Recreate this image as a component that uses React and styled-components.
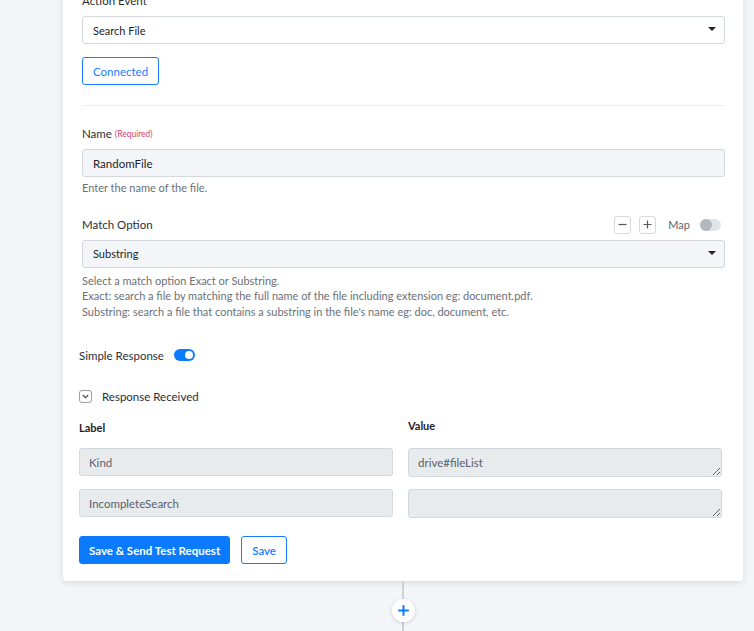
import React from "react";
import styled, { createGlobalStyle } from "styled-components";

const Global = createGlobalStyle`
  html, body { margin: 0; padding: 0; background: #f3f5f8; }
  body { font-family: "Lato", "Open Sans", sans-serif; color: #1e2329; overflow: hidden; }
  * { box-sizing: border-box; }
`;

const Page = styled.div`
  width: 754px;
  height: 631px;
  overflow: hidden;
  padding-left: 63px;
  padding-right: 11px;
  display: flex;
  flex-direction: column;
  align-items: stretch;
`;

const Card = styled.div`
  margin-top: -7px;
  background: #fff;
  border-radius: 0 0 4px 4px;
  box-shadow: 0 2px 6px rgba(30, 40, 60, 0.12);
  padding: 0 0 17px 0;
`;

const Upper = styled.div`
  padding: 0 18px 0 19px;
`;

const Lower = styled.div`
  padding: 0 21px 0 16px;
`;

const Label = styled.div`
  font-size: 11.5px;
  line-height: 16px;
  color: #2a2f35;
  margin-bottom: ${p => p.$mb ?? 7}px;
  display: flex;
  align-items: center;
`;

const Required = styled.span`
  color: #d1456c;
  font-size: 8.5px;
  margin-left: 3px;
`;

const SelectBox = styled.div`
  height: 28px;
  border: 1px solid #d3d7de;
  border-radius: 3px;
  background: ${p => (p.$filled ? "#f3f5f8" : "#fff")};
  display: flex;
  align-items: center;
  justify-content: space-between;
  padding: 0 8px 0 10px;
  font-size: 11px;
  color: #1e2329;
`;

const Caret = styled.span`
  width: 0;
  height: 0;
  border-left: 4px solid transparent;
  border-right: 4px solid transparent;
  border-top: 4px solid #222;
  margin-top: -2px;
`;

const ButtonRow = styled.div`
  display: flex;
  gap: 11px;
  margin-top: ${p => p.$mt ?? 0}px;
`;

const OutlineButton = styled.button`
  height: 28px;
  padding: 0 10px;
  background: #fff;
  border: 1px solid #1a7bff;
  border-radius: 3px;
  color: #1a7bff;
  font-family: inherit;
  font-size: 11.5px;
  font-weight: ${p => (p.$bold ? 600 : 400)};
  cursor: pointer;
`;

const PrimaryButton = styled.button`
  height: 28px;
  padding: 0 9px;
  background: #0a7bff;
  border: 1px solid #0a7bff;
  border-radius: 3px;
  color: #fff;
  font-family: inherit;
  font-size: 11.5px;
  font-weight: 700;
`;

const Divider = styled.div`
  height: 1px;
  background: #eceff3;
  margin: 20px 0 20px;
`;

const TextInput = styled.input`
  width: 100%;
  height: 28px;
  border: 1px solid #d3d7de;
  border-radius: 3px;
  background: ${p => (p.$dim ? "#e8ebee" : "#f3f5f8")};
  padding: 0 ${p => (p.$dim ? 9 : 10)}px;
  font-family: inherit;
  font-size: 11.5px;
  color: ${p => (p.$dim ? "#596069" : "#1e2329")};
  outline: none;
  display: block;
`;

const TextArea = styled.textarea`
  width: 100%;
  height: 29px;
  min-height: 29px;
  border: 1px solid #d3d7de;
  border-radius: 3px;
  background: #e8ebee;
  padding: 6px 9px;
  font-family: inherit;
  font-size: 11.5px;
  line-height: 16px;
  color: #596069;
  outline: none;
  display: block;
  resize: vertical;
  overflow: hidden;
`;

const Help = styled.div`
  font-size: 11px;
  line-height: 15.5px;
  color: #6a7078;
  margin-top: ${p => p.$mt ?? 3}px;
`;

const FieldHeader = styled.div`
  display: flex;
  align-items: center;
  justify-content: space-between;
  margin-top: 20px;
  margin-bottom: 6px;
  height: 18px;
`;

const Controls = styled.div`
  display: flex;
  align-items: center;
  gap: 8px;
  margin-right: 4px;
`;

const SquareBtn = styled.div`
  width: 17px;
  height: 18px;
  border: 1px solid #d6dae0;
  border-radius: 3px;
  display: flex;
  align-items: center;
  justify-content: center;
  color: #555b63;
`;

const MapText = styled.span`
  font-size: 11px;
  color: #5d636b;
  margin-left: 4px;
  margin-right: 2px;
`;

const Toggle = styled.div`
  width: 21px;
  height: 12px;
  border-radius: 6px;
  background: ${p => (p.$on ? "#0a7bff" : "#e2e5e9")};
  position: relative;
  flex-shrink: 0;
  &::after {
    content: "";
    position: absolute;
    top: ${p => (p.$on ? 2 : 0)}px;
    left: ${p => (p.$on ? 11 : 0)}px;
    width: ${p => (p.$on ? 8 : 12)}px;
    height: ${p => (p.$on ? 8 : 12)}px;
    border-radius: 50%;
    background: ${p => (p.$on ? "#fff" : "#b3b8be")};
  }
`;

const Row = styled.div`
  display: flex;
  align-items: center;
  gap: ${p => p.$gap ?? 10}px;
  margin-top: ${p => p.$mt ?? 0}px;
  font-size: 11.5px;
  color: #2a2f35;
  height: 16px;
`;

const CheckBox = styled.div`
  width: 13px;
  height: 13px;
  border: 1px solid #9aa0a7;
  border-radius: 3px;
  display: flex;
  align-items: center;
  justify-content: center;
`;

const Grid = styled.div`
  display: grid;
  grid-template-columns: 1fr 1fr;
  column-gap: 15px;
  row-gap: 12px;
  margin-top: 14px;
`;

const ColHead = styled.div`
  font-size: 11px;
  font-weight: 700;
  color: #1e2329;
  line-height: 16px;
  margin-bottom: 2px;
  transform: translateY(${p => p.$dy ?? 0}px);
`;

const Connector = styled.div`
  flex: 1;
  display: flex;
  flex-direction: column;
  align-items: center;
  position: relative;
`;

const Line = styled.div`
  width: 2px;
  flex: 1;
  background: #cdd1d6;
`;

const PlusCircle = styled.div`
  position: absolute;
  top: 18px;
  width: 23px;
  height: 23px;
  border-radius: 50%;
  background: #fff;
  box-shadow: 0 1px 4px rgba(0, 0, 0, 0.15);
  display: flex;
  align-items: center;
  justify-content: center;
`;

export default function App() {
  return (
    <>
      <Global />
      <Page>
        <Card>
          <Upper>
            <Label>Action Event</Label>
            <SelectBox>
              <span>Search File</span>
              <Caret />
            </SelectBox>
            <ButtonRow $mt={13}>
              <OutlineButton>Connected</OutlineButton>
            </ButtonRow>
            <Divider />
            <Label>
              Name<Required>(Required)</Required>
            </Label>
            <TextInput defaultValue="RandomFile" readOnly />
            <Help>Enter the name of the file.</Help>
            <FieldHeader>
              <Label $mb={0}>Match Option</Label>
              <Controls>
                <SquareBtn>
                  <svg width="9" height="9" viewBox="0 0 9 9">
                    <path d="M0.5 4.5h8" stroke="#555b63" strokeWidth="1.2" />
                  </svg>
                </SquareBtn>
                <SquareBtn>
                  <svg width="9" height="9" viewBox="0 0 9 9">
                    <path d="M0.5 4.5h8M4.5 0.5v8" stroke="#555b63" strokeWidth="1.2" />
                  </svg>
                </SquareBtn>
                <MapText>Map</MapText>
                <Toggle />
              </Controls>
            </FieldHeader>
            <SelectBox $filled>
              <span>Substring</span>
              <Caret />
            </SelectBox>
            <Help $mt={5}>
              Select a match option Exact or Substring.
              <br />
              Exact: search a file by matching the full name of the file including extension eg: document.pdf.
              <br />
              Substring: search a file that contains a substring in the file's name eg: doc, document, etc.
            </Help>
          </Upper>
          <Lower>
            <Row $mt={28} $gap={10}>
              <span>Simple Response</span>
              <Toggle $on />
            </Row>
            <Row $mt={25} $gap={10}>
              <CheckBox>
                <svg width="7" height="5" viewBox="0 0 7 5">
                  <path d="M0.8 1l2.7 2.7L6.2 1" stroke="#444" strokeWidth="1.1" fill="none" />
                </svg>
              </CheckBox>
              <span>Response Received</span>
            </Row>
            <Grid>
              <ColHead $dy={2}>Label</ColHead>
              <ColHead>Value</ColHead>
              <TextInput $dim defaultValue="Kind" readOnly />
              <TextArea defaultValue="drive#fileList" readOnly />
              <TextInput $dim defaultValue="IncompleteSearch" readOnly />
              <TextArea defaultValue="" readOnly />
            </Grid>
            <ButtonRow $mt={18}>
              <PrimaryButton>Save &amp; Send Test Request</PrimaryButton>
              <OutlineButton $bold>Save</OutlineButton>
            </ButtonRow>
          </Lower>
        </Card>
        <Connector>
          <Line />
          <PlusCircle>
            <svg width="11" height="11" viewBox="0 0 11 11">
              <path d="M1 5.5h9M5.5 1v9" stroke="#0a7bff" strokeWidth="2" strokeLinecap="round" />
            </svg>
          </PlusCircle>
        </Connector>
      </Page>
    </>
  );
}
